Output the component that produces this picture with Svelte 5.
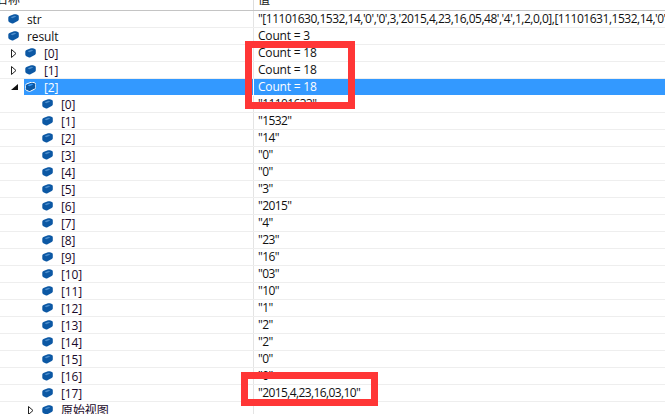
<script>
  const values = ['"11101633"','"1532"','"14"','"0"','"0"','"3"','"2015"','"4"','"23"','"16"','"03"','"10"','"1"','"2"','"2"','"0"','"0"','"2015,4,23,16,03,10"'];
  const rows = [
    { name: 'str', value: "\"[11101630,1532,14,'0','0',3,'2015,4,23,16,05,48','4',1,2,0,0],[11101631,1532,14,'0','0',3,'2015,4,23,16,05,48'", level: 0, long: true },
    { name: 'result', value: 'Count = 3', level: 0 },
    { name: '[0]', value: 'Count = 18', level: 1, arrow: 'closed' },
    { name: '[1]', value: 'Count = 18', level: 1, arrow: 'closed' },
    { name: '[2]', value: 'Count = 18', level: 1, arrow: 'open', selected: true },
    ...values.map((value, i) => ({ name: `[${i}]`, value, level: 2, num: true })),
    { name: '原始视图', value: '', level: 2, arrow: 'closed', raw: true }
  ];
</script>

<div class="page">
  <div class="header">
    <div class="name-head"><span>名称</span></div>
    <div class="value-head"><span>值</span></div>
  </div>
  {#each rows as row}
    <div class="row" class:selected={row.selected}>
      <div class="name l{row.level}" class:raw={row.raw}>
        <span class="arrow">
          {#if row.arrow === 'closed'}
            <svg width="6" height="9" viewBox="0 0 6 9"><path d="M0.5 0.5 L5 4.5 L0.5 8.5 Z" fill="#fff" stroke="#222" stroke-width="1"/></svg>
          {:else if row.arrow === 'open'}
            <svg width="7" height="7" viewBox="0 0 7 7"><path d="M7 0 V6 H0 Z" fill="#111"/></svg>
          {/if}
        </span>
        <span class="label">
          <span class="icon" class:sel={row.selected}>
            <svg width="11" height="10" viewBox="0 0 11 10">
              <path d="M0.3 3.5 Q0.3 2.4 2 1.8 L6 0.3 Q7 0 8 0.3 L10 1 Q10.8 1.4 10.8 2.5 V5.5 Q10.8 6.3 9.7 7 L5.5 9.2 Q4.5 9.8 3.5 9.2 L1.3 8.2 Q0.3 7.7 0.3 6.5 Z" fill="#0c58a4" stroke={row.selected ? '#fff' : 'none'} stroke-width="1"/>
              <path d="M2.6 3.2 L6.4 1.7 L8.4 2.4 L4.4 4.2 Z" fill={row.selected ? '#3399ff' : '#4b8ccb'}/>
            </svg>
          </span>
          <span class="text">{row.name}</span>
        </span>
      </div>
      <div class="value" class:num={row.num} class:long={row.long}>{row.value}</div>
    </div>
  {/each}
  <div class="mark mark-a"></div>
  <div class="mark mark-b"></div>
</div>

<style>
  :global(body) { margin: 0; background: #fff; }
  .page {
    position: relative;
    width: 665px;
    height: 414px;
    overflow: hidden;
    background: #fff;
    font: 12px/17px "Open Sans", "Noto Sans CJK SC", sans-serif;
    color: #111;
  }
  .header {
    display: grid;
    grid-template-columns: 253px 1fr;
    height: 10px;
    overflow: hidden;
    border-bottom: 1px solid #c4c4c4;
  }
  .name-head { overflow: hidden; }
  .name-head span { display: block; margin: -9px 0 0 -4px; }
  .value-head { border-left: 1px solid #ddd; overflow: hidden; padding-left: 4px; }
  .value-head span { display: block; margin-top: -9px; }
  .row {
    display: grid;
    grid-template-columns: 253px 1fr;
    height: 17px;
    box-sizing: border-box;
    border-bottom: 1px solid #eeeeee;
    white-space: nowrap;
  }
  .name { display: flex; align-items: center; height: 16px; min-width: 0; }
  .arrow { display: flex; align-items: center; justify-content: center; flex: none; }
  .l0 .arrow { width: 7px; }
  .l1 .arrow { width: 24px; justify-content: flex-start; padding-left: 11px; box-sizing: border-box; }
  .l2 .arrow { width: 41px; justify-content: flex-start; padding-left: 28px; box-sizing: border-box; }
  .label { display: flex; align-items: center; height: 16px; flex: 1; }
  .icon { display: flex; width: 20px; padding-left: 1px; box-sizing: border-box; flex: none; }
  .text { color: #1a0a2a; letter-spacing: -0.1px; }
  .l0 .text { color: #111; }
  .value {
    border-left: 1px solid #e4e4e4;
    padding-left: 4px;
    overflow: hidden;
    line-height: 16px;
    letter-spacing: -0.2px;
  }
  .value.num { letter-spacing: -0.6px; }
  .value.long { letter-spacing: -0.48px; }
  .selected .label { background: #3399ff; }
  .selected .text { color: #fff; }
  .selected .value { background: #3399ff; color: #fff; border-left-color: #fff; }
  .selected { border-bottom-color: #fff; }
  .mark { position: absolute; border: 7px solid #ff3636; box-sizing: border-box; }
  .mark-a { left: 245px; top: 41px; width: 110px; height: 68px; }
  .mark-b { left: 241px; top: 372px; width: 137px; height: 34px; }
</style>
